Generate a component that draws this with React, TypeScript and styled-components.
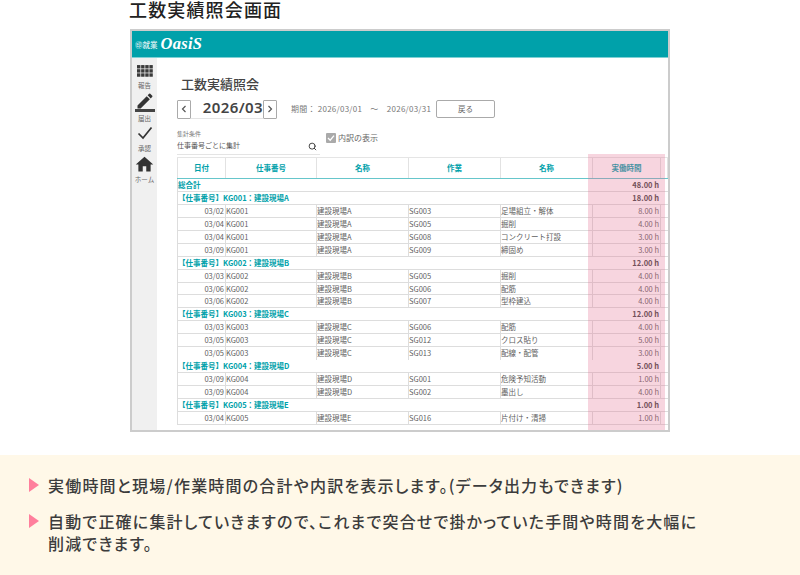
import styled, { createGlobalStyle } from "styled-components";
import { MdEdit, MdHome } from "react-icons/md";
import { Search } from "lucide-react";

const CJK = `"Noto Sans CJK JP", "Noto Sans", sans-serif`;

const GlobalStyle = createGlobalStyle`
  html, body {
    margin: 0;
    padding: 0;
    background: #fff;
    font-family: ${CJK};
    overflow: hidden;
  }
`;

const Page = styled.div`
  width: 800px;
  height: 575px;
  display: flex;
  flex-direction: column;
`;

const Heading = styled.h2`
  margin: 0 0 0 129px;
  height: 29px;
  font-size: 18px;
  line-height: 19px;
  font-weight: 500;
  letter-spacing: 1.15px;
  color: #222;
`;

const Shot = styled.div`
  width: 540px;
  height: 403px;
  margin-left: 130px;
  box-sizing: border-box;
  border: 2px solid #ccc;
  display: flex;
  flex-direction: column;
`;

const TopBar = styled.div`
  height: 27px;
  box-sizing: border-box;
  background: #00a1aa;
  border-bottom: 1px solid #7fd0d4;
  display: flex;
  align-items: center;
  padding-left: 3px;
  gap: 3px;
  color: #fff;
`;

const Maker = styled.span`
  font-size: 7.5px;
  font-weight: 500;
  opacity: 0.9;
`;

const Logo = styled.span`
  font-family: "Liberation Serif", serif;
  font-style: italic;
  font-weight: 700;
  font-size: 16.5px;
  letter-spacing: 0.3px;
`;

const Body = styled.div`
  flex: 1;
  display: flex;
  min-height: 0;
`;

const Side = styled.div`
  width: 25px;
  background: #f0f0f0;
  display: flex;
  flex-direction: column;
  align-items: center;
  padding-top: 7px;
  box-sizing: border-box;
`;

const SideItem = styled.div<{ $h: number }>`
  height: ${(p) => p.$h}px;
  display: flex;
  flex-direction: column;
  align-items: center;
  color: #333;
`;

const SideLabel = styled.span<{ $gap?: number }>`
  margin-top: ${(p) => p.$gap ?? 0}px;
  font-size: 6.5px;
  line-height: 9px;
  color: #666;
  white-space: nowrap;
`;

const PenBar = styled.div`
  width: 20px;
  height: 3px;
  background: #444;
  margin-bottom: 2px;
`;

const Main = styled.div`
  flex: 1;
  position: relative;
  padding-left: 20px;
  min-width: 0;
`;

const ScreenTitle = styled.h3`
  margin: 17px 0 0 4px;
  height: 24px;
  font-size: 13px;
  line-height: 18px;
  font-weight: 500;
  color: #444;
`;

const DateRow = styled.div`
  display: flex;
  align-items: center;
  height: 20px;
`;

const StepButton = styled.div`
  width: 14px;
  height: 19px;
  box-sizing: border-box;
  border: 1px solid #aaa;
  border-radius: 1px;
  background: #fff;
  display: flex;
  align-items: center;
  justify-content: center;
  color: #555;
`;

const Month = styled.div`
  width: 72px;
  height: 19px;
  box-sizing: border-box;
  border-bottom: 1px solid #e4e4e4;
  font-family: "Noto Sans", sans-serif;
  font-size: 15px;
  line-height: 15px;
  font-weight: 600;
  letter-spacing: 0.4px;
  color: #444;
  text-align: right;
`;

const Period = styled.div`
  margin-left: 14px;
  width: 145px;
  margin-top: -1px;
  font-size: 8px;
  letter-spacing: 0.25px;
  color: #777;
  white-space: nowrap;
`;

const BackButton = styled.div`
  width: 59px;
  height: 18px;
  box-sizing: border-box;
  border: 1px solid #aaa;
  border-radius: 2px;
  font-size: 7.5px;
  line-height: 16px;
  text-align: center;
  color: #666;
`;

const FilterRow = styled.div`
  display: flex;
  height: 38px;
  padding-top: 10px;
  box-sizing: border-box;
`;

const Filter = styled.div`
  width: 143px;
  height: 26px;
  box-sizing: border-box;
  border-bottom: 1px solid #e4e4e4;
  position: relative;
  color: #666;
`;

const FilterCaption = styled.div`
  font-size: 6px;
  line-height: 10px;
  color: #777;
`;

const FilterValue = styled.div`
  font-size: 7px;
  line-height: 13px;
  color: #555;
`;

const SearchMark = styled.span`
  position: absolute;
  right: 3px;
  top: 13px;
  color: #333;
  display: flex;
`;

const Check = styled.div`
  margin-left: 6px;
  display: flex;
  align-items: center;
  height: 11px;
  margin-top: 3px;
  gap: 2px;
  font-size: 8px;
  color: #666;
`;

const CheckBox = styled.span`
  width: 10px;
  height: 10px;
  border-radius: 1px;
  background: #aaa;
  display: flex;
  align-items: center;
  justify-content: center;
`;

const Table = styled.div`
  width: 491px;
  font-size: 7.5px;
  color: #5f5f5f;
`;

const Row = styled.div<{ $flush?: boolean }>`
  display: grid;
  grid-template-columns: 48px 91px 92px 92px 92px 68px 8px;
  height: 12.95px;
  box-sizing: border-box;
  line-height: 11.9px;
  border-bottom: ${(p) => (p.$flush ? "0" : "1px solid #ddd")};
  white-space: nowrap;
`;

const HeadRow = styled(Row)`
  height: 22px;
  line-height: 20px;
  border-top: 1px solid #e5e5e5;
  border-bottom: 1px solid #66c6cb;
`;

const HeadCell = styled.div`
  text-align: center;
  font-weight: 700;
  color: #00a1aa;
  border-left: 1px solid #e2e2e2;
  &:last-child {
    border-right: 1px solid #e2e2e2;
  }
`;

const Cell = styled.div<{ $right?: boolean }>`
  border-left: 1px solid #ddd;
  padding: ${(p) => (p.$right ? "0 1px 0 0" : "0")};
  text-align: ${(p) => (p.$right ? "right" : "left")};
  overflow: hidden;
`;

const GroupLabel = styled.div`
  grid-column: span 5;
  font-weight: 700;
  color: #00a1aa;
  border-left: 1px solid #ddd;
`;

const GroupHours = styled.div`
  grid-column: 6;
  padding-right: 1px;
  text-align: right;
  font-weight: 700;
  color: #444;
`;

const PinkColumn = styled.div`
  position: absolute;
  left: 431px;
  top: 96px;
  width: 77px;
  height: 276px;
  background: rgba(228, 110, 145, 0.29);
  pointer-events: none;
`;

const Notes = styled.ul`
  margin: 23px 0 0;
  flex: 1;
  list-style: none;
  background: #fff8e8;
  padding: 19px 102px 0 48px;
  display: flex;
  flex-direction: column;
  gap: 14px;
`;

const Note = styled.li`
  position: relative;
  font-size: 16px;
  line-height: 22px;
  font-weight: 500;
  letter-spacing: 1.2px;
  font-feature-settings: "palt";
  color: #3c3c3c;
  &::before {
    content: "";
    position: absolute;
    left: -19px;
    top: 4px;
    border-left: 10px solid #ff7f9c;
    border-top: 7.5px solid transparent;
    border-bottom: 7.5px solid transparent;
  }
`;

type Line = { day: string; job: string; site: string; task: string; name: string; hours: string; flush?: boolean };
type Group = { job: string; site: string; hours: string; lines: Line[] };

const line = (day: string, job: string, site: string, task: string, name: string, hours: string, flush?: boolean): Line => ({
  day, job, site, task, name, hours, flush,
});

const groups: Group[] = [
  {
    job: "KG001", site: "建設現場A", hours: "18.00 h",
    lines: [
      line("03/02", "KG001", "建設現場A", "SG003", "足場組立・解体", "8.00 h"),
      line("03/04", "KG001", "建設現場A", "SG005", "掘削", "4.00 h"),
      line("03/04", "KG001", "建設現場A", "SG008", "コンクリート打設", "3.00 h"),
      line("03/09", "KG001", "建設現場A", "SG009", "締固め", "3.00 h"),
    ],
  },
  {
    job: "KG002", site: "建設現場B", hours: "12.00 h",
    lines: [
      line("03/03", "KG002", "建設現場B", "SG005", "掘削", "4.00 h"),
      line("03/06", "KG002", "建設現場B", "SG006", "配筋", "4.00 h"),
      line("03/06", "KG002", "建設現場B", "SG007", "型枠建込", "4.00 h"),
    ],
  },
  {
    job: "KG003", site: "建設現場C", hours: "12.00 h",
    lines: [
      line("03/03", "KG003", "建設現場C", "SG006", "配筋", "4.00 h"),
      line("03/05", "KG003", "建設現場C", "SG012", "クロス貼り", "5.00 h"),
      line("03/05", "KG003", "建設現場C", "SG013", "配線・配管", "3.00 h", true),
    ],
  },
  {
    job: "KG004", site: "建設現場D", hours: "5.00 h",
    lines: [
      line("03/09", "KG004", "建設現場D", "SG001", "危険予知活動", "1.00 h"),
      line("03/09", "KG004", "建設現場D", "SG002", "墨出し", "4.00 h"),
    ],
  },
  {
    job: "KG005", site: "建設現場E", hours: "1.00 h",
    lines: [line("03/04", "KG005", "建設現場E", "SG016", "片付け・清掃", "1.00 h")],
  },
];

const headers = ["日付", "仕事番号", "名称", "作業", "名称", "実働時間", ""];

function GridIcon() {
  const cells = [];
  for (let y = 0; y < 3; y++) {
    for (let x = 0; x < 4; x++) {
      cells.push(<rect key={`${x}-${y}`} x={x * 4} y={y * 4} width={3.3} height={3.3} fill="#3a3a3a" />);
    }
  }
  return (
    <svg width="16" height="12" viewBox="0 0 15.5 11.5">
      {cells}
    </svg>
  );
}

function Chevron({ left }: { left?: boolean }) {
  return (
    <svg width="6" height="8" viewBox="0 0 6 8">
      <path d={left ? "M4.5 1 L1.5 4 L4.5 7" : "M1.5 1 L4.5 4 L1.5 7"} fill="none" stroke="#555" strokeWidth="1.2" />
    </svg>
  );
}

export default function App() {
  return (
    <Page>
      <GlobalStyle />
      <Heading>工数実績照会画面</Heading>
      <Shot>
        <TopBar>
          <Maker>㊞就業</Maker>
          <Logo>OasiS</Logo>
        </TopBar>
        <Body>
          <Side>
            <SideItem $h={27}>
              <GridIcon />
              <SideLabel $gap={4}>報告</SideLabel>
            </SideItem>
            <SideItem $h={34}>
              <MdEdit size={20} style={{ margin: "-1px 0 -2px" }} />
              <PenBar />
              <SideLabel>届出</SideLabel>
            </SideItem>
            <SideItem $h={30}>
              <svg width="16" height="14" viewBox="0 0 16 14">
                <path d="M1.5 7.5 L6 12 L14.5 1.5" fill="none" stroke="#333" strokeWidth="1.7" />
              </svg>
              <SideLabel $gap={4}>承認</SideLabel>
            </SideItem>
            <SideItem $h={30}>
              <MdHome size={21} style={{ margin: "-2px 0 0" }} />
              <SideLabel>ホーム</SideLabel>
            </SideItem>
          </Side>
          <Main>
            <ScreenTitle>工数実績照会</ScreenTitle>
            <DateRow>
              <StepButton>
                <Chevron left />
              </StepButton>
              <Month>2026/03</Month>
              <StepButton>
                <Chevron />
              </StepButton>
              <Period>期間： 2026/03/01　～　2026/03/31</Period>
              <BackButton>戻る</BackButton>
            </DateRow>
            <FilterRow>
              <Filter>
                <FilterCaption>集計条件</FilterCaption>
                <FilterValue>仕事番号ごとに集計</FilterValue>
                <SearchMark>
                  <Search size={9} strokeWidth={2.4} />
                </SearchMark>
              </Filter>
              <Check>
                <CheckBox>
                  <svg width="8" height="8" viewBox="0 0 8 8">
                    <path d="M1 4 L3.2 6.2 L7 1.6" fill="none" stroke="#fff" strokeWidth="1.3" />
                  </svg>
                </CheckBox>
                内訳の表示
              </Check>
            </FilterRow>
            <Table>
              <HeadRow>
                {headers.map((h, i) => (
                  <HeadCell key={i}>{h}</HeadCell>
                ))}
              </HeadRow>
              <Row>
                <GroupLabel>総合計</GroupLabel>
                <GroupHours>48.00 h</GroupHours>
              </Row>
              {groups.map((g) => (
                <div key={g.job}>
                  <Row>
                    <GroupLabel>
                      【仕事番号】{g.job}：{g.site}
                    </GroupLabel>
                    <GroupHours>{g.hours}</GroupHours>
                  </Row>
                  {g.lines.map((l, i) => (
                    <Row key={i} $flush={l.flush}>
                      <Cell $right>{l.day}</Cell>
                      <Cell>{l.job}</Cell>
                      <Cell>{l.site}</Cell>
                      <Cell>{l.task}</Cell>
                      <Cell>{l.name}</Cell>
                      <Cell $right>{l.hours}</Cell>
                      <Cell />
                    </Row>
                  ))}
                </div>
              ))}
            </Table>
            <PinkColumn />
          </Main>
        </Body>
      </Shot>
      <Notes>
        <Note>実働時間と現場/作業時間の合計や内訳を表示します。(データ出力もできます)</Note>
        <Note>自動で正確に集計していきますので、これまで突合せで掛かっていた手間や時間を大幅に削減できます。</Note>
      </Notes>
    </Page>
  );
}
